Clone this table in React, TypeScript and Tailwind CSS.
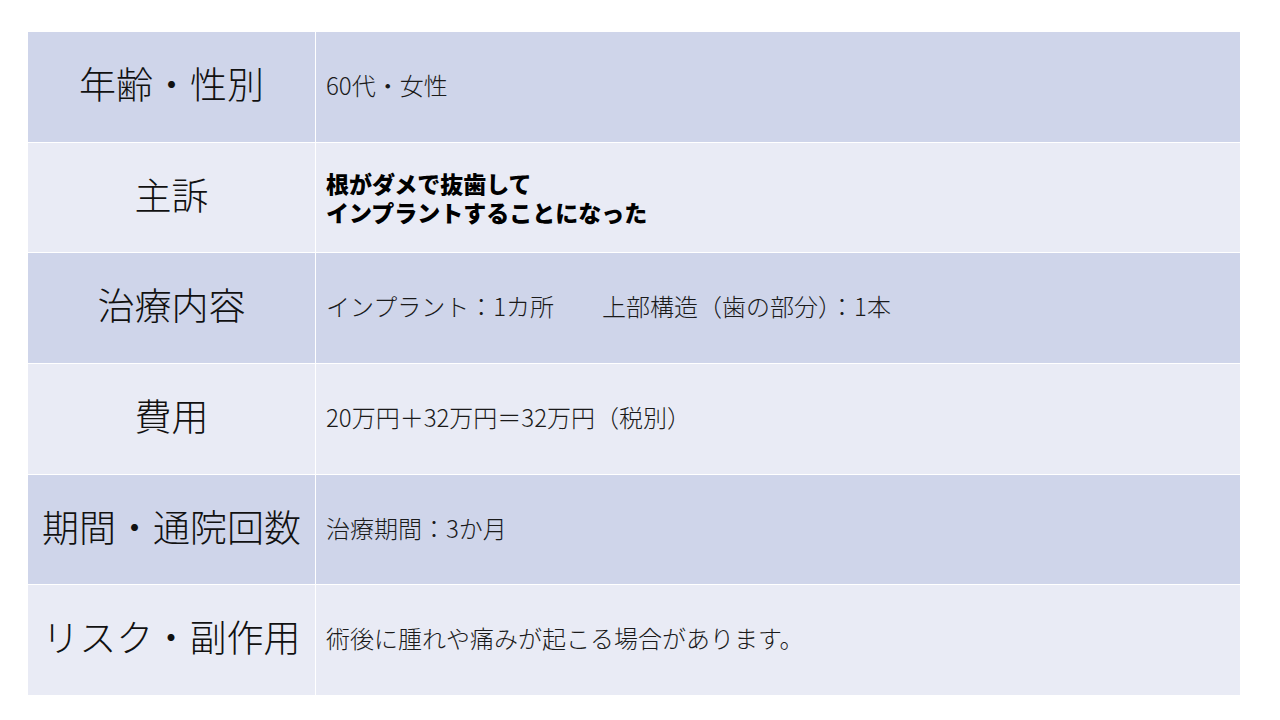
import React from "react";

const rows: { label: string; content: React.ReactNode; dark: boolean }[] = [
  { label: "年齢・性別", content: "60代・女性", dark: true },
  {
    label: "主訴",
    content: (
      <div className="flex flex-col gap-[6px] font-black text-[23px] leading-[23px] text-black pt-[4px]">
        <span className="block h-[23px] overflow-visible">根がダメで抜歯して</span>
        <span className="block h-[23px] overflow-visible">インプラントすることになった</span>
      </div>
    ),
    dark: false,
  },
  { label: "治療内容", content: "インプラント：1カ所　　上部構造（歯の部分）：1本", dark: true },
  { label: "費用", content: "20万円＋32万円＝32万円（税別）", dark: false },
  { label: "期間・通院回数", content: "治療期間：3か月", dark: true },
  { label: "リスク・副作用", content: "術後に腫れや痛みが起こる場合があります。", dark: false },
];

export default function App() {
  return (
    <div
      className="w-[1280px] h-[720px] bg-white pt-[32px] pl-[28px]"
      style={{ fontFamily: '"Noto Sans CJK JP", "Noto Sans", sans-serif' }}
    >
      <div className="w-[1212px] h-[663px] flex flex-col gap-px bg-white">
        {rows.map((r, i) => (
          <div key={i} className="flex-1 flex gap-px">
            <div
              className={`w-[287px] flex items-center justify-center pb-[6px] text-[37px] font-light text-[#111] ${
                r.dark ? "bg-[#cfd5ea]" : "bg-[#e9ebf5]"
              }`}
            >
              {r.label}
            </div>
            <div
              className={`flex-1 flex items-center pl-[10px] pb-[4px] text-[24px] font-light text-[#1a1a1a] ${
                r.dark ? "bg-[#cfd5ea]" : "bg-[#e9ebf5]"
              }`}
            >
              {r.content}
            </div>
          </div>
        ))}
      </div>
    </div>
  );
}
